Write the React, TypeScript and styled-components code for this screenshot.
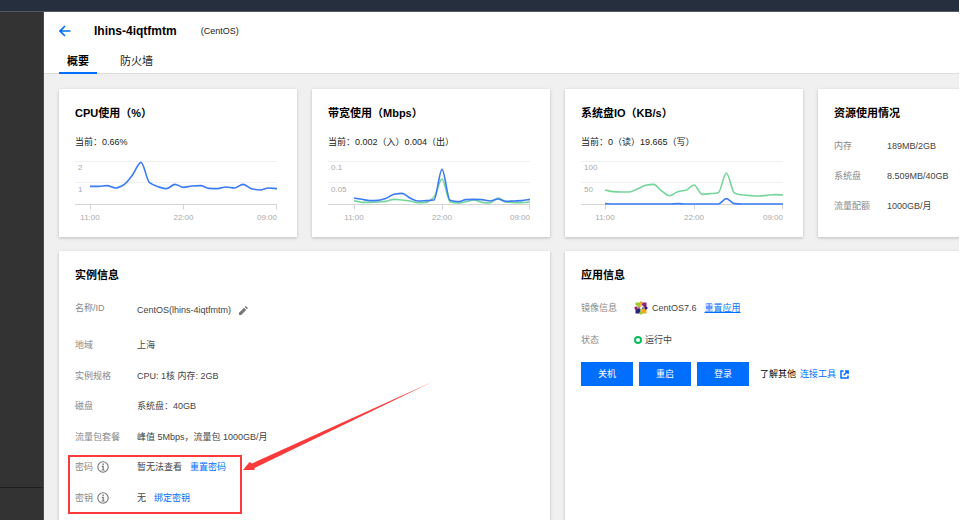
import React from "react";
import styled, { createGlobalStyle, css } from "styled-components";

const blue = "#006eff";

const GlobalStyle = createGlobalStyle`
  * { box-sizing: border-box; }
  body {
    margin: 0;
    background: #fff;
    color: #000;
    font: 9px/16px "Liberation Sans", "Noto Sans CJK SC", sans-serif;
  }
  h1, h2, p, dl, dd { margin: 0; }
`;

const Page = styled.div`
  display: flex;
  flex-direction: column;
  height: 100vh;
  padding-right: 5px;
  overflow: hidden;
`;

const TopBar = styled.div`
  flex: none;
  height: 12px;
  background: #262f3e;
  border-bottom: 1px solid #555963;
`;

const Body = styled.div`
  display: flex;
  flex: 1;
  min-height: 0;
`;

const Sidebar = styled.nav`
  display: flex;
  flex-direction: column;
  justify-content: flex-end;
  flex: none;
  width: 44px;
  background: #333;
  border-right: 1px solid #4a4a4a;
`;

const SidebarFooter = styled.div`
  height: 33px;
  border-top: 1px solid #1f1f1f;
`;

const Main = styled.main`
  flex: 1;
  min-width: 0;
  overflow: hidden;
  background: #f0f0f0;
`;

const Header = styled.header`
  padding: 11px 15px 0;
  background: #fff;
  border-bottom: 1px solid #ddd;
`;

const TitleLine = styled.div`
  display: flex;
  align-items: center;
  height: 16px;
`;

const BackButton = styled.button`
  display: flex;
  padding: 0;
  border: 0;
  background: none;
  color: ${blue};
`;

const InstanceName = styled.h1`
  margin-left: 23px;
  font-size: 12px;
  line-height: 16px;
`;

const SystemName = styled.span`
  margin-left: 24px;
  color: #222;
`;

const Tabs = styled.div`
  display: flex;
  gap: 15px;
  margin-top: 11px;
`;

const Tab = styled.button<{ $active?: boolean }>`
  height: 24px;
  margin-bottom: -1px;
  padding: 0 8px;
  border: 0;
  border-bottom: 2px solid ${(p) => (p.$active ? blue : "transparent")};
  background: none;
  color: ${(p) => (p.$active ? "#000" : "#222")};
  font-family: inherit;
  font-size: 11px;
  line-height: 20px;
  font-weight: ${(p) => (p.$active ? 700 : 400)};
`;

const Cards = styled.div`
  display: grid;
  grid-template-columns: repeat(4, minmax(238px, 1fr));
  gap: 14px 15px;
  padding: 15px;
`;

const Card = styled.section<{ $wide?: boolean }>`
  position: relative;
  grid-column: span ${(p) => (p.$wide ? 2 : 1)};
  min-height: ${(p) => (p.$wide ? 290 : 148)}px;
  padding: 16px 20px 12px 16px;
  background: #fff;
  box-shadow: 0 1px 3px rgba(0, 0, 0, 0.22);
`;

const CardTitle = styled.h2`
  font-size: 11px;
  line-height: 16px;
`;

const Current = styled.p`
  margin: 13px 0 10px;
  color: #222;
`;

const ChartSvg = styled.svg`
  display: block;
  width: 100%;
  fill: none;
  text {
    fill: #aaa;
    font-size: 8px;
  }
`;

const Details = styled.dl<{ $top: number }>`
  margin-top: ${(p) => p.$top}px;
`;

const Row = styled.div<{ $label: number; $height: number; $first?: boolean }>`
  display: grid;
  grid-template-columns: ${(p) => p.$label}px 1fr;
  align-items: center;
  height: ${(p) => p.$height}px;
  ${(p) =>
    p.$first &&
    css`
      align-items: start;
      dd {
        padding-top: 2px;
      }
    `}
`;

const Label = styled.dt`
  display: flex;
  align-items: center;
  gap: 4px;
  color: #888;
  white-space: nowrap;
`;

const Value = styled.dd`
  display: flex;
  align-items: center;
  color: #444;
  white-space: nowrap;
`;

const Link = styled.a<{ $underline?: boolean }>`
  display: inline-flex;
  align-items: center;
  gap: 4px;
  color: ${blue};
  text-decoration: ${(p) => (p.$underline ? "underline" : "none")};
`;

const SpacedLink = styled(Link)`
  margin-left: 8px;
`;

const EditButton = styled.button`
  display: flex;
  margin-left: 8px;
  padding: 0;
  border: 0;
  background: none;
`;

const Status = styled.span`
  width: 8px;
  height: 8px;
  margin-right: 3px;
  border: 2px solid #0abf5b;
  border-radius: 50%;
`;

const Actions = styled.div`
  display: flex;
  align-items: center;
  gap: 6px;
  margin-top: 6px;
  white-space: nowrap;
`;

const ActionButton = styled.button`
  width: 52px;
  height: 24px;
  padding: 0;
  border: 0;
  background: ${blue};
  color: #fff;
  font: inherit;
`;

const Hint = styled.span`
  display: flex;
  gap: 4px;
  margin-left: 5px;
`;

const LogoWrap = styled.span`
  display: flex;
  margin-right: 4px;
`;

const Highlight = styled.div`
  position: absolute;
  left: 9px;
  top: 204px;
  width: 174px;
  height: 59px;
  border: 2px solid #fb3b3b;
`;

const Pointer = styled.svg`
  position: absolute;
  left: 184px;
  top: 131px;
`;

const PLOT_RIGHT = 202;
const PLOT_BOTTOM = 44;
const PLOT_HEIGHT = 43;
const SCALE_MAX = 129;

/** Builds a monotone cubic path through hourly samples. */
function smoothPath(values: number[], left: number): string {
  const step = (PLOT_RIGHT - left) / (values.length - 1);
  const pts = values.map((v, i) => [left + i * step, PLOT_BOTTOM - (v / SCALE_MAX) * PLOT_HEIGHT]);
  const slope = pts.slice(1).map((p, i) => (p[1] - pts[i][1]) / step);
  const tangent = pts.map((_, i) => {
    if (i === 0) return slope[0];
    if (i === pts.length - 1) return slope[i - 1];
    const a = slope[i - 1];
    const b = slope[i];
    return a * b <= 0 ? 0 : (2 * a * b) / (a + b);
  });
  return pts.reduce((d, [x, y], i) => {
    if (i === 0) return `M${x},${y}`;
    const [px, py] = pts[i - 1];
    const c = step / 3;
    return `${d}C${px + c},${py + tangent[i - 1] * c} ${x - c},${y - tangent[i] * c} ${x},${y}`;
  }, "");
}

type Series = { color: string; values: number[] };
type ChartProps = { name: string; left: number; ticks: [string, string]; series: Series[] };

function Chart({ name, left, ticks, series }: ChartProps) {
  const middle = (left + PLOT_RIGHT) / 2;
  return (
    <ChartSvg viewBox="0 0 202 64" role="img" aria-label={name}>
      <path d="M0 1.5H202M0 22.5H202" stroke="#f0f0f0" />
      <path
        d={`M0 44.5H202M${Math.floor(left) + 0.5} 44.5v5M${Math.floor(middle) + 0.5} 44.5v5M201.5 44.5v5`}
        stroke="#d4d4d4"
      />
      <text x="3" y="10">{ticks[0]}</text>
      <text x="3" y="32">{ticks[1]}</text>
      <text x={left} y="60" textAnchor="middle">11:00</text>
      <text x={middle} y="60" textAnchor="middle">22:00</text>
      <text x="202" y="60" textAnchor="end">09:00</text>
      {series.map((s) => (
        <path key={s.color} d={smoothPath(s.values, left)} stroke={s.color} strokeWidth="1.6" strokeLinejoin="round" />
      ))}
    </ChartSvg>
  );
}

const lineBlue = "#3b7cf5";
const lineGreen = "#74d69b";

const cpu: Series[] = [
  { color: lineBlue, values: [53, 53, 55, 48, 58, 87, 125, 64, 52, 46, 59, 50, 54, 55, 47, 46, 51, 48, 59, 46, 42, 48, 46] },
];
const bandwidth: Series[] = [
  { color: lineGreen, values: [10, 5, 5, 6, 8, 14, 12, 9, 4, 5, 21, 75, 7, 3, 7, 12, 5, 3, 18, 6, 4, 4, 6] },
  { color: lineBlue, values: [18, 14, 10, 11, 17, 29, 32, 18, 9, 10, 12, 104, 11, 7, 13, 14, 13, 9, 15, 8, 9, 10, 14] },
];
const diskIo: Series[] = [
  { color: lineGreen, values: [42, 37, 36, 36, 45, 56, 59, 39, 25, 37, 41, 57, 29, 31, 34, 93, 33, 27, 25, 24, 26, 28, 27] },
  { color: lineBlue, values: [1, 0, 0, 0, 0, 0, 0, 0, 0, 1, 0, 0, 0, 0, 0, 16, 1, 0, 0, 0, 0, 0, 0] },
];

const BackIcon = () => (
  <svg width="12" height="12" viewBox="0 0 12 12" fill="none" stroke="currentColor" strokeWidth="1.6">
    <path d="M11.5 6H1.5M6 1L1 6l5 5" />
  </svg>
);

const InfoIcon = () => (
  <svg width="12" height="12" viewBox="0 0 12 12" fill="none" stroke="#777">
    <circle cx="6" cy="6" r="5.2" strokeWidth="1.1" />
    <path d="M4.7 5.3H6.2V9M4.6 9h3" strokeWidth="1.2" />
    <path d="M5.4 3.3h1.4" strokeWidth="1.4" />
  </svg>
);

const PencilIcon = () => (
  <svg width="9" height="9" viewBox="0 0 9 9" fill="#777">
    <path d="M0 9V6.8L5 1.8 7.2 4 2.2 9zM5.7 1.1L6.8 0 9 2.2 7.9 3.3z" />
  </svg>
);

const ExternalIcon = () => (
  <svg width="9" height="9" viewBox="0 0 9 9" fill="none" stroke="currentColor" strokeWidth="1.5">
    <path d="M3.5 1H1V8H8V5.5M5 .9H8.1V4M8 1L3.7 5.3" />
  </svg>
);

const CentosLogo = () => (
  <svg width="14" height="14" viewBox="0 0 14 14">
    <path fill="#9ccd2a" d="M1.5 1.5h5v5h-2l-3-3z" />
    <path fill="#932279" d="M7.5 1.5h5v5h-2l-3-3z" />
    <path fill="#262577" d="M1.5 7.5h5v5h-5z" />
    <path fill="#efa724" d="M7.5 7.5h5v5h-5z" />
    <path fill="#efa724" d="M7 0l2 2.2-1.4 1V6H6.4V3.2L5 2.2z" />
    <path fill="#932279" d="M0 7l2.2-2 1 1.4H6v1.2H3.2L2.2 9z" />
    <path fill="#262577" d="M14 7l-2.2 2-1-1.4H8V6.4h2.8l1-1.4z" />
    <path fill="#9ccd2a" d="M7 14l-2-2.2 1.4-1V8h1.2v2.8l1.4 1z" />
  </svg>
);

export default function App() {
  return (
    <Page>
      <GlobalStyle />
      <TopBar />
      <Body>
        <Sidebar>
          <SidebarFooter />
        </Sidebar>
        <Main>
          <Header>
            <TitleLine>
              <BackButton type="button" aria-label="返回">
                <BackIcon />
              </BackButton>
              <InstanceName>lhins-4iqtfmtm</InstanceName>
              <SystemName>(CentOS)</SystemName>
            </TitleLine>
            <Tabs role="tablist">
              <Tab type="button" role="tab" aria-selected="true" $active>概要</Tab>
              <Tab type="button" role="tab" aria-selected="false">防火墙</Tab>
            </Tabs>
          </Header>
          <Cards>
            <Card>
              <CardTitle>CPU使用（%）</CardTitle>
              <Current>当前：0.66%</Current>
              <Chart name="CPU使用" left={15} ticks={["2", "1"]} series={cpu} />
            </Card>
            <Card>
              <CardTitle>带宽使用（Mbps）</CardTitle>
              <Current>当前：0.002（入）0.004（出）</Current>
              <Chart name="带宽使用" left={26} ticks={["0.1", "0.05"]} series={bandwidth} />
            </Card>
            <Card>
              <CardTitle>系统盘IO（KB/s）</CardTitle>
              <Current>当前：0（读）19.665（写）</Current>
              <Chart name="系统盘IO" left={24} ticks={["100", "50"]} series={diskIo} />
            </Card>
            <Card>
              <CardTitle>资源使用情况</CardTitle>
              <Details $top={10}>
                <Row $label={53} $height={30}><Label>内存</Label><Value>189MB/2GB</Value></Row>
                <Row $label={53} $height={30}><Label>系统盘</Label><Value>8.509MB/40GB</Value></Row>
                <Row $label={53} $height={30}><Label>流量配额</Label><Value>1000GB/月</Value></Row>
              </Details>
            </Card>
            <Card $wide>
              <CardTitle>实例信息</CardTitle>
              <Details $top={17}>
                <Row $label={62} $height={30} $first>
                  <Label>名称/ID</Label>
                  <Value>
                    CentOS(lhins-4iqtfmtm)
                    <EditButton type="button" aria-label="编辑名称"><PencilIcon /></EditButton>
                  </Value>
                </Row>
                <Row $label={62} $height={30}><Label>地域</Label><Value>上海</Value></Row>
                <Row $label={62} $height={31}><Label>实例规格</Label><Value>CPU: 1核 内存: 2GB</Value></Row>
                <Row $label={62} $height={30}><Label>磁盘</Label><Value>系统盘：40GB</Value></Row>
                <Row $label={62} $height={31}><Label>流量包套餐</Label><Value>峰值 5Mbps，流量包 1000GB/月</Value></Row>
                <Row $label={62} $height={30}>
                  <Label>密码<InfoIcon /></Label>
                  <Value>暂无法查看<SpacedLink href="#reset-password">重置密码</SpacedLink></Value>
                </Row>
                <Row $label={62} $height={31}>
                  <Label>密钥<InfoIcon /></Label>
                  <Value>无<SpacedLink href="#bind-key">绑定密钥</SpacedLink></Value>
                </Row>
              </Details>
              <Highlight />
              <Pointer width="190" height="90" viewBox="0 0 190 90" fill="#fb3b3b" aria-hidden="true">
                <path d="M0 88L6.5 80 9 81.5 189 0 11.5 86 11.5 88z" />
              </Pointer>
            </Card>
            <Card $wide>
              <CardTitle>应用信息</CardTitle>
              <Details $top={9}>
                <Row $label={53} $height={32}>
                  <Label>镜像信息</Label>
                  <Value>
                    <LogoWrap><CentosLogo /></LogoWrap>
                    CentOS7.6
                    <SpacedLink href="#reset-app" $underline>重置应用</SpacedLink>
                  </Value>
                </Row>
                <Row $label={53} $height={32}>
                  <Label>状态</Label>
                  <Value><Status />运行中</Value>
                </Row>
              </Details>
              <Actions>
                <ActionButton type="button">关机</ActionButton>
                <ActionButton type="button">重启</ActionButton>
                <ActionButton type="button">登录</ActionButton>
                <Hint>
                  了解其他
                  <Link href="#tools">连接工具<ExternalIcon /></Link>
                </Hint>
              </Actions>
            </Card>
          </Cards>
        </Main>
      </Body>
    </Page>
  );
}
